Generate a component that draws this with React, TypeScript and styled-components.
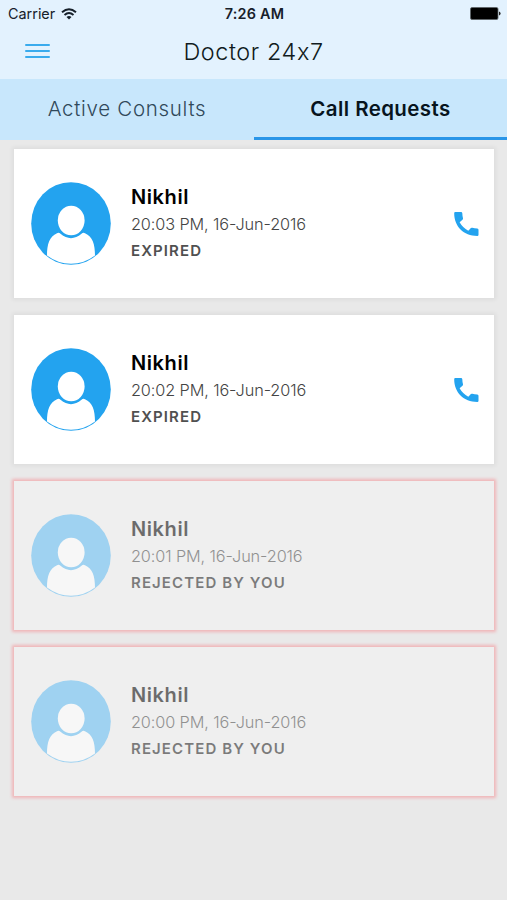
import React from 'react';
import styled, { createGlobalStyle } from 'styled-components';

const GlobalStyle = createGlobalStyle`
  * { box-sizing: border-box; }
  body {
    margin: 0;
    background: #e9e9e9;
    font-family: Inter, 'Liberation Sans', sans-serif;
  }
`;

const Screen = styled.div`
  width: 507px;
  height: 900px;
  overflow: hidden;
  background: #e9e9e9;
`;

const StatusBar = styled.div`
  display: grid;
  grid-template-columns: 1fr auto 1fr;
  align-items: center;
  height: 27px;
  padding: 0 6px 0 8px;
  background: #e3f2fe;
  color: #16202a;
`;

const Carrier = styled.div`
  display: flex;
  align-items: center;
  gap: 6px;
  font-size: 14.4px;
  letter-spacing: 0;
`;

const Clock = styled.div`
  position: relative;
  font-size: 14.4px;
  font-weight: 600;
  letter-spacing: 0.2px;
`;

const Battery = styled.svg`
  justify-self: end;
`;

const Header = styled.header`
  display: grid;
  grid-template-columns: 90px 1fr 90px;
  align-items: center;
  height: 52px;
  padding-bottom: 4px;
  background: #e3f2fe;
`;

const MenuButton = styled.button`
  display: flex;
  flex-direction: column;
  gap: 4px;
  width: 25px;
  margin: 0 0 0 25px;
  padding: 0;
  border: 0;
  background: none;
`;

const MenuLine = styled.span`
  height: 2.2px;
  border-radius: 1px;
  background: #3aabed;
`;

const Title = styled.h1`
  margin: 0;
  padding-top: 1px;
  text-align: center;
  color: #101a20;
  font-size: 23.4px;
  line-height: 30px;
  font-weight: 350;
  letter-spacing: 0.6px;
`;

const Tabs = styled.nav`
  display: grid;
  grid-template-columns: 254px 1fr;
  height: 61px;
  background: #c8e7fc;
`;

const Tab = styled.div<{ $active?: boolean }>`
  display: flex;
  align-items: center;
  justify-content: center;
  padding-bottom: ${(p) => (p.$active ? '0' : '2px')};
  border-bottom: ${(p) => (p.$active ? '3px solid #2a96e8' : '0')};
  color: ${(p) => (p.$active ? '#07141d' : '#31495a')};
  font-size: 20.5px;
  font-weight: ${(p) => (p.$active ? 600 : 300)};
  letter-spacing: ${(p) => (p.$active ? '0.4px' : '0.7px')};
`;

const List = styled.main`
  display: flex;
  flex-direction: column;
  gap: 17px;
  padding: 9px 13.5px 0 14px;
`;

const Card = styled.article<{ $rejected: boolean }>`
  display: flex;
  align-items: center;
  height: 149px;
  padding: 0 15px 0 17px;
  background: ${(p) => (p.$rejected ? '#efefef' : '#fff')};
  box-shadow: ${(p) =>
    p.$rejected ? '0 0 3px 2px #f0b4b7' : '0 0 4px 2px rgba(0, 0, 0, 0.05)'};
`;

const Avatar = styled.svg<{ $rejected: boolean }>`
  flex: none;
  color: ${(p) => (p.$rejected ? '#9fd2f1' : '#23a3ef')};
`;

const Details = styled.div<{ $rejected: boolean }>`
  flex: 1;
  margin-left: 20px;
  opacity: ${(p) => (p.$rejected ? 0.55 : 1)};
`;

const Name = styled.div`
  color: #000;
  font-size: 20px;
  line-height: 28px;
  font-weight: 600;
  letter-spacing: 0.6px;
`;

const Time = styled.div`
  color: #444;
  font-size: 16.3px;
  line-height: 27px;
  font-weight: 300;
  letter-spacing: -0.12px;
`;

const Status = styled.div<{ $rejected: boolean }>`
  color: ${(p) => (p.$rejected ? '#1c1c1c' : '#505050')};
  font-size: 15px;
  line-height: 26px;
  font-weight: 600;
  letter-spacing: 1.1px;
`;

const CallButton = styled.button`
  display: flex;
  margin: 0;
  padding: 0;
  border: 0;
  background: none;
  color: #23a3ef;
`;

const requests = [
  { time: '20:03 PM, 16-Jun-2016', status: 'EXPIRED', rejected: false },
  { time: '20:02 PM, 16-Jun-2016', status: 'EXPIRED', rejected: false },
  { time: '20:01 PM, 16-Jun-2016', status: 'REJECTED BY YOU', rejected: true },
  { time: '20:00 PM, 16-Jun-2016', status: 'REJECTED BY YOU', rejected: true },
];

function PersonAvatar({ rejected }: { rejected: boolean }) {
  const fill = rejected ? '#f7f7f7' : '#fff';
  return (
    <Avatar $rejected={rejected} width="80" height="83" viewBox="0 0 80 83">
      <ellipse cx="40" cy="41.5" rx="39.8" ry="41.3" fill="currentColor" />
      <path
        d="M16 73.5C16 62 18.500 54.500 26 51.200Q28 50.300 29.500 51.800Q40 60.500 50.500 51.800Q52 50.300 54 51.200C61.500 54.500 64 62 64 73.500Q53 81.800 40 81.800Q27 81.800 16 73.500Z"
        fill={fill}
      />
      <ellipse cx="40.200" cy="38.500" rx="13.400" ry="14.700" fill={fill} />
    </Avatar>
  );
}

export default function App() {
  return (
    <>
      <GlobalStyle />
      <Screen>
        <StatusBar>
          <Carrier>
            Carrier
            <svg width="16" height="12" viewBox="0 0 16 12" fill="none" stroke="currentColor">
              <path d="M1 4.300Q8-2 15 4.300" strokeWidth="1.900" />
              <path d="M3.500 7Q8 3 12.500 7" strokeWidth="1.900" />
              <path d="M5.500 9Q8 6.800 10.500 9L8 11.600Z" fill="currentColor" stroke="none" />
            </svg>
          </Carrier>
          <Clock>7:26 AM</Clock>
          <Battery width="31" height="13" viewBox="0 0 31 13">
            <rect x="0.500" y="0.500" width="27.500" height="12" rx="1.500" fill="#000" stroke="#5c6266" strokeWidth="0.800" />
            <path d="M29 4.500Q30.600 4.800 30.600 6.500T29 8.500Z" fill="#222" />
          </Battery>
        </StatusBar>
        <Header>
          <MenuButton aria-label="Menu">
            <MenuLine />
            <MenuLine />
            <MenuLine />
          </MenuButton>
          <Title>Doctor 24x7</Title>
        </Header>
        <Tabs>
          <Tab>Active Consults</Tab>
          <Tab $active>Call Requests</Tab>
        </Tabs>
        <List>
          {requests.map((r) => (
            <Card key={r.time} $rejected={r.rejected}>
              <PersonAvatar rejected={r.rejected} />
              <Details $rejected={r.rejected}>
                <Name>Nikhil</Name>
                <Time>{r.time}</Time>
                <Status $rejected={r.rejected}>{r.status}</Status>
              </Details>
              {!r.rejected && (
                <CallButton aria-label="Call">
                  <svg width="25" height="24" viewBox="0 0 25 24" fill="currentColor">
                    <path d="M1.200 0H7Q8.200 0 8.300 1.200Q8.400 4.200 9 6.200Q9.200 7 8.500 7.700L5.600 10.200Q8.600 15.500 14.300 18.700L16.900 16.100Q17.500 15.600 18.300 15.800Q20.500 16.400 23.300 16.400Q24.500 16.500 24.500 17.700V22.700Q24.500 24 23.300 24C9.500 24 0.200 14.500 0.200 1.300Q0.200 0 1.200 0Z" />
                  </svg>
                </CallButton>
              )}
            </Card>
          ))}
        </List>
      </Screen>
    </>
  );
}
